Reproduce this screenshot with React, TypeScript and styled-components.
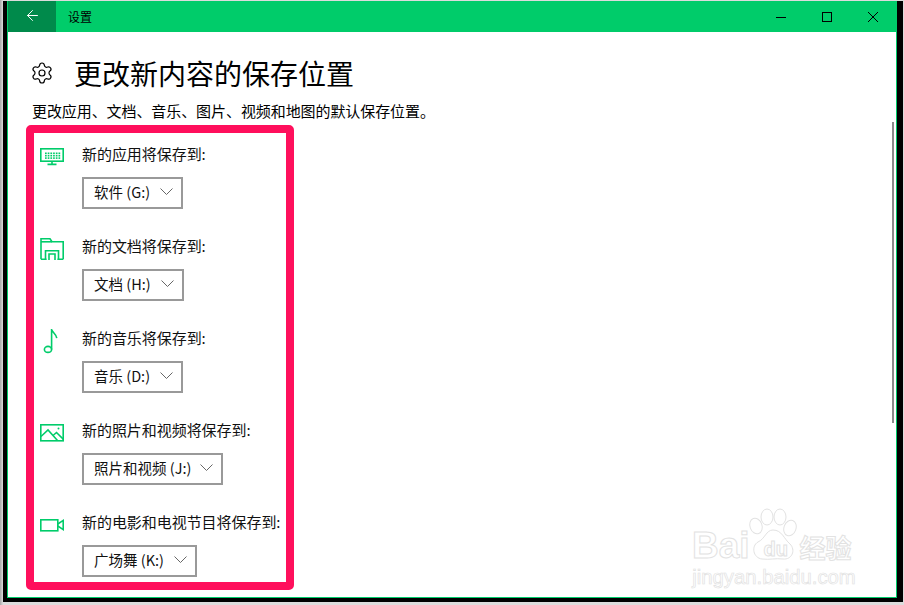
import { FC, ReactNode } from "react";
import styled, { createGlobalStyle } from "styled-components";
import { ArrowLeft, Settings } from "lucide-react";

const GREEN = "#00cc6a";
const CJK = `"Noto Sans CJK SC", "Open Sans", sans-serif`;

const GlobalStyle = createGlobalStyle`
  html, body {
    margin: 0;
    height: 100%;
    overflow: hidden;
    font-family: "Open Sans", "Noto Sans CJK SC", sans-serif;
  }
`;

const Desktop = styled.div`
  box-sizing: border-box;
  height: 100vh;
  padding: 1px 1px 3px 3px;
  background: linear-gradient(90deg, #a8a8a8, #dcdcdc 3px);
  display: flex;
`;

const Frame = styled.div`
  flex: 1;
  display: flex;
  border: solid #000;
  border-width: 0 6px 4px 4px;
`;

const Win = styled.div`
  flex: 1;
  position: relative;
  display: flex;
  flex-direction: column;
  overflow: hidden;
  background: #fff;
  border: 1px solid ${GREEN};
  border-top: 0;
`;

const TitleBar = styled.div`
  height: 31px;
  flex: none;
  display: flex;
  align-items: center;
  background: ${GREEN};
  color: #000;
`;

const BackButton = styled.div`
  width: 48px;
  align-self: stretch;
  display: flex;
  align-items: center;
  justify-content: center;
  padding-bottom: 2px;
  box-sizing: border-box;
  background: #008a4b;
  color: #fff;
  margin-right: 12px;
`;

const TitleText = styled.span`
  font-family: ${CJK};
  font-size: 12px;
  padding-bottom: 1px;
  flex: 1;
`;

const WinButton = styled.div`
  width: 46px;
  align-self: stretch;
  display: flex;
  align-items: center;
  justify-content: center;
`;

const Content = styled.div`
  flex: 1;
  padding: 21px 0 0 18px;
  font-family: ${CJK};
  color: #000;
`;

const Heading = styled.div`
  display: flex;
  align-items: center;
  height: 40px;
  padding-left: 5px;
`;

const HeadingIcon = styled.div`
  width: 22px;
  height: 22px;
  margin-right: 21px;
  display: flex;
`;

const HeadingText = styled.h1`
  margin: 0;
  font-size: 28px;
  font-weight: 400;
  line-height: 40px;
`;

const Description = styled.p`
  margin: 7px 0 3px 6px;
  font-size: 15px;
  line-height: 22px;
  letter-spacing: -0.08px;
`;

const Highlight = styled.div`
  box-sizing: border-box;
  width: 268px;
  height: 465px;
  padding: 11px 0 5px 6px;
  border: 8px solid #ff0f5c;
  border-radius: 5px;
  display: flex;
  flex-direction: column;
  gap: 27px;
`;

const Row = styled.div`
  display: flex;
  height: 65px;
`;

const IconSlot = styled.div`
  width: 24px;
  height: 26px;
  margin-right: 18px;
  flex: none;
`;

const Field = styled.div`
  display: flex;
  flex-direction: column;
  align-items: flex-start;
  gap: 11px;
`;

const Label = styled.div`
  font-size: 15px;
  line-height: 20px;
  margin-bottom: 2px;
  letter-spacing: -0.05px;
  white-space: nowrap;
  color: #111;
`;

const Select = styled.div<{ $width: number }>`
  box-sizing: border-box;
  width: ${(p) => p.$width}px;
  height: 32px;
  border: 2px solid #999;
  padding: 0 8px 3px 10px;
  display: flex;
  align-items: center;
  justify-content: space-between;
  font-size: 14.5px;
  white-space: nowrap;
  color: #111;
`;

const Scrollbar = styled.div`
  position: absolute;
  top: 121px;
  right: 2px;
  width: 2px;
  height: 301px;
  background: #8a8a8a;
`;

const Watermark = styled.div`
  position: absolute;
  left: 684px;
  top: 507px;
  width: 164px;
  height: 80px;
  display: flex;
  flex-direction: column;
  align-items: center;
  justify-content: flex-end;
  color: #fff;
  -webkit-text-stroke: 1px #e2e2e2;
  white-space: nowrap;
  font-family: "Liberation Sans", sans-serif;
`;

const Paw = styled.svg`
  position: absolute;
  left: 55px;
  top: 0;
`;

const MarkTop = styled.div`
  display: flex;
  align-items: flex-end;
  width: 100%;
  height: 34px;
  font-size: 37px;
  line-height: 34px;
  font-weight: 700;
`;

const MarkDu = styled.span`
  margin: 0 3px 0 14px;
  font-size: 20px;
  line-height: 27px;
  position: relative;
  width: 33px;
`;

const MarkCjk = styled.span`
  font-family: ${CJK};
  font-size: 26px;
  line-height: 32px;
`;

const MarkUrl = styled.div`
  margin-top: 3px;
  font-size: 20.3px;
  line-height: 22px;
  -webkit-text-stroke-width: 0.7px;
`;

const Glyph: FC<{ children: ReactNode }> = ({ children }) => (
  <svg
    width="24"
    height="26"
    viewBox="0 0 24 26"
    fill="none"
    stroke={GREEN}
    strokeWidth="1.6"
    style={{ display: "block" }}
  >
    {children}
  </svg>
);

const keys: [number, number][] = [];
for (let y = 8.5; y < 14; y += 2.4) {
  for (let x = 5; x < 19; x += 2.7) keys.push([x, y]);
}

const MonitorIcon = () => (
  <Glyph>
    <rect x="0.8" y="4.8" width="22.4" height="12.4" />
    <path d="M12 17.5v2.4M7.5 20.4h9" />
    {keys.map(([x, y]) => (
      <rect key={`${x}-${y}`} x={x} y={y} width="1.7" height="1.6" fill={GREEN} stroke="none" />
    ))}
  </Glyph>
);

const FolderIcon = () => (
  <Glyph>
    <path d="M1 23.2V2.8h9l2 3h11.2v17.4" />
    <path d="M1 5.8h11" />
    <path d="M1 23.2h5.5M17.5 23.2H23.2" />
    <path d="M5.5 24v-9.3h13V24M9 24v-6h6V24" />
  </Glyph>
);

const MusicIcon = () => (
  <Glyph>
    <ellipse cx="8" cy="21.4" rx="3.6" ry="3" />
    <path d="M11.6 21.4V1c.3 3.6 4.6 4.6 5.2 9.2" />
  </Glyph>
);

const ImageIcon = () => (
  <Glyph>
    <rect x="0.8" y="4.8" width="22.4" height="16" />
    <path d="M1 16.5l7-6.5 9.5 10.5M13 15.5l3.5-3 7 7" />
    <circle cx="18.5" cy="8.5" r="1" fill={GREEN} stroke="none" />
  </Glyph>
);

const VideoIcon = () => (
  <Glyph>
    <rect x="0.8" y="7.8" width="17" height="11" />
    <path d="M17.8 12l5.4-3.6v9.2L17.8 14" />
  </Glyph>
);

const rows = [
  { icon: <MonitorIcon />, label: "新的应用将保存到:", value: "软件 (G:)", width: 101 },
  { icon: <FolderIcon />, label: "新的文档将保存到:", value: "文档 (H:)", width: 102 },
  { icon: <MusicIcon />, label: "新的音乐将保存到:", value: "音乐 (D:)", width: 101 },
  { icon: <ImageIcon />, label: "新的照片和视频将保存到:", value: "照片和视频 (J:)", width: 141 },
  { icon: <VideoIcon />, label: "新的电影和电视节目将保存到:", value: "广场舞 (K:)", width: 115 },
];

const App: FC = () => {
  return (
    <Desktop>
      <GlobalStyle />
      <Frame>
        <Win>
          <TitleBar>
            <BackButton>
              <ArrowLeft size={17} strokeWidth={1.4} />
            </BackButton>
            <TitleText>设置</TitleText>
            <WinButton>
              <svg width="10" height="10" viewBox="0 0 10 10" stroke="#000" fill="none">
                <path d="M0 5.5h10" />
              </svg>
            </WinButton>
            <WinButton>
              <svg width="10" height="10" viewBox="0 0 10 10" stroke="#000" fill="none">
                <rect x="0.5" y="0.5" width="9" height="9" />
              </svg>
            </WinButton>
            <WinButton>
              <svg width="10" height="10" viewBox="0 0 10 10" stroke="#000" fill="none">
                <path d="M0 0l10 10M10 0L0 10" />
              </svg>
            </WinButton>
          </TitleBar>
          <Content>
            <Heading>
              <HeadingIcon>
                <Settings size={24} strokeWidth={1.2} style={{ margin: -1 }} />
              </HeadingIcon>
              <HeadingText>更改新内容的保存位置</HeadingText>
            </Heading>
            <Description>更改应用、文档、音乐、图片、视频和地图的默认保存位置。</Description>
            <Highlight>
              {rows.map((row) => (
                <Row key={row.label}>
                  <IconSlot>{row.icon}</IconSlot>
                  <Field>
                    <Label>{row.label}</Label>
                    <Select $width={row.width}>
                      {row.value}
                      <svg width="13" height="7" viewBox="0 0 13 7" fill="none" stroke="#666">
                        <path d="M0.5 0.5l6 6 6-6" />
                      </svg>
                    </Select>
                  </Field>
                </Row>
              ))}
            </Highlight>
          </Content>
          <Scrollbar />
          <Watermark>
            <Paw width="50" height="52" viewBox="0 0 50 52" fill="none" stroke="#e2e2e2" strokeWidth="1">
              <ellipse cx="9" cy="18" rx="6" ry="8" transform="rotate(-20 9 18)" />
              <ellipse cx="20" cy="9" rx="6" ry="8" />
              <ellipse cx="33" cy="9" rx="6" ry="8" />
              <ellipse cx="43" cy="20" rx="6" ry="8" transform="rotate(20 43 20)" />
              <path d="M26 22c-7 0-8 9-15 12-7 4-5 16 4 17 8 1 13-1 21 0 9 1 13-9 7-15-6-5-8-14-17-14z" />
            </Paw>
            <MarkTop>
              Bai
              <MarkDu>du</MarkDu>
              <MarkCjk>经验</MarkCjk>
            </MarkTop>
            <MarkUrl>jingyan.baidu.com</MarkUrl>
          </Watermark>
        </Win>
      </Frame>
    </Desktop>
  );
};

export default App;
